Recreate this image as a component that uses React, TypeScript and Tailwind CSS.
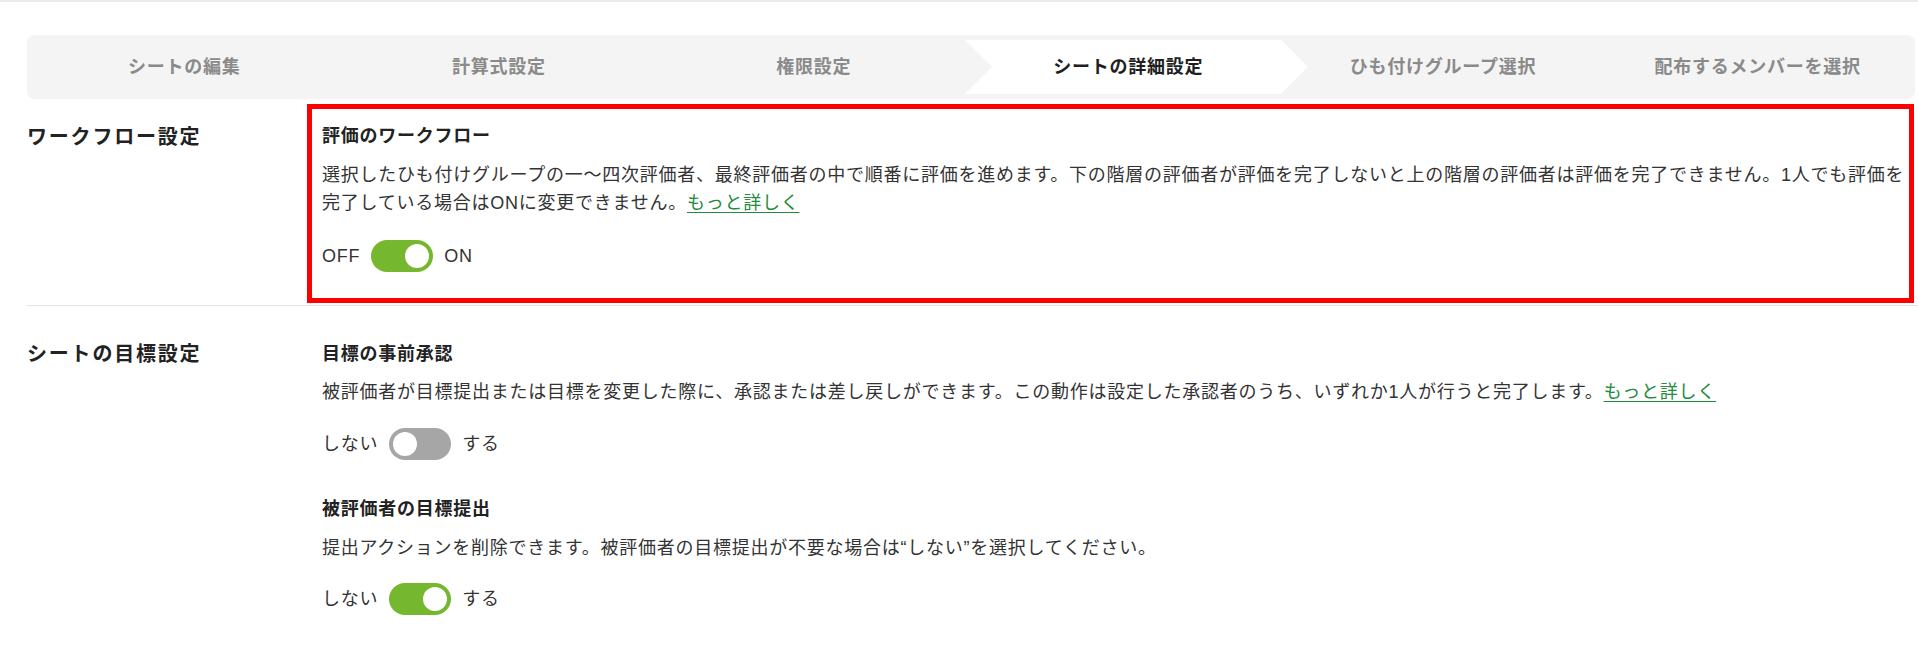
import React from "react";

const tabs = [
  "シートの編集",
  "計算式設定",
  "権限設定",
  "シートの詳細設定",
  "ひも付けグループ選択",
  "配布するメンバーを選択",
];
const activeTab = 3;

function Toggle({ on }: { on: boolean }) {
  return (
    <span
      className={
        "flex h-[32px] w-[62px] items-center rounded-full p-[4px] " +
        (on ? "justify-end bg-[#75b72e]" : "justify-start bg-[#a6a6a6]")
      }
    >
      <span className="h-[24px] w-[24px] rounded-full bg-white" />
    </span>
  );
}

function SwitchRow({ off, on, value }: { off: string; on: string; value: boolean }) {
  return (
    <div className="flex items-center gap-[11px] text-[18px] leading-[28px] text-[#333]">
      <span>{off}</span>
      <Toggle on={value} />
      <span>{on}</span>
    </div>
  );
}

function MoreLink() {
  return (
    <a href="#" className="text-[#238b3c] underline underline-offset-[3px]">
      もっと詳しく
    </a>
  );
}

export default function App() {
  return (
    <div
      className="min-h-screen bg-white tracking-[0.75px] text-[#333]"
      style={{ fontFamily: '"Liberation Sans", "Noto Sans CJK JP", sans-serif' }}
    >
      {/* header edge */}
      <div className="h-[2px] bg-[#ebebeb]" />

      <div className="pl-[27px] pr-[3px]">
        {/* step tabs */}
        <nav className="mt-[33px] grid h-[64px] grid-cols-6 rounded-[8px] bg-[#f4f4f4]">
          {tabs.map((t, i) => (
            <div key={t} className="relative flex items-center justify-center">
              {i === activeTab && (
                <div className="absolute top-[5px] bottom-[5px] -left-[6px] -right-[22px] bg-white [clip-path:polygon(0_0,calc(100%_-_26px)_0,100%_50%,calc(100%_-_27px)_100%,0_100%,27px_50%)]" />
              )}
              <span
                className={
                  "relative text-[18px] font-bold leading-[28px] " +
                  (i === activeTab ? "text-[#1f1f1f]" : "text-[#8a8a8a]")
                }
              >
                {t}
              </span>
            </div>
          ))}
        </nav>

        {/* workflow section */}
        <section className="-mr-[3px] flex border-b border-[#e3e3e3] pt-[5px] pb-[2px]">
          <h2 className="w-[280px] shrink-0 pt-[19px] text-[20px] font-bold leading-[28px] tracking-[1.8px] text-[#222]">
            ワークフロー設定
          </h2>
          <div className="mr-[4px] flex-1 border-[5px] border-[#ff0000] pt-[13px] pb-[26px] pl-[10px]">
            <h3 className="text-[18px] font-bold leading-[28px] text-[#222]">評価のワークフロー</h3>
            <p className="mt-[11px] whitespace-nowrap text-[18px] leading-[28px]">
              選択したひも付けグループの一〜四次評価者、最終評価者の中で順番に評価を進めます。下の階層の評価者が評価を完了しないと上の階層の評価者は評価を完了できません。1人でも評価を
              <br />
              完了している場合はONに変更できません。
              <MoreLink />
            </p>
            <div className="mt-[23px]">
              <SwitchRow off="OFF" on="ON" value={true} />
            </div>
          </div>
        </section>

        {/* goal section */}
        <section className="flex pt-[34px]">
          <h2 className="w-[295px] shrink-0 text-[20px] font-bold leading-[28px] tracking-[1.8px] text-[#222]">
            シートの目標設定
          </h2>
          <div className="flex-1">
            <h3 className="text-[18px] font-bold leading-[28px] text-[#222]">目標の事前承認</h3>
            <p className="mt-[10px] text-[18px] leading-[28px]">
              被評価者が目標提出または目標を変更した際に、承認または差し戻しができます。この動作は設定した承認者のうち、いずれか1人が行うと完了します。
              <MoreLink />
            </p>
            <div className="mt-[22px]">
              <SwitchRow off="しない" on="する" value={false} />
            </div>

            <h3 className="mt-[35px] text-[18px] font-bold leading-[28px] text-[#222]">被評価者の目標提出</h3>
            <p className="mt-[11px] text-[18px] leading-[28px]">
              提出アクションを削除できます。被評価者の目標提出が不要な場合は“しない”を選択してください。
            </p>
            <div className="mt-[21px]">
              <SwitchRow off="しない" on="する" value={true} />
            </div>
          </div>
        </section>
      </div>
    </div>
  );
}
